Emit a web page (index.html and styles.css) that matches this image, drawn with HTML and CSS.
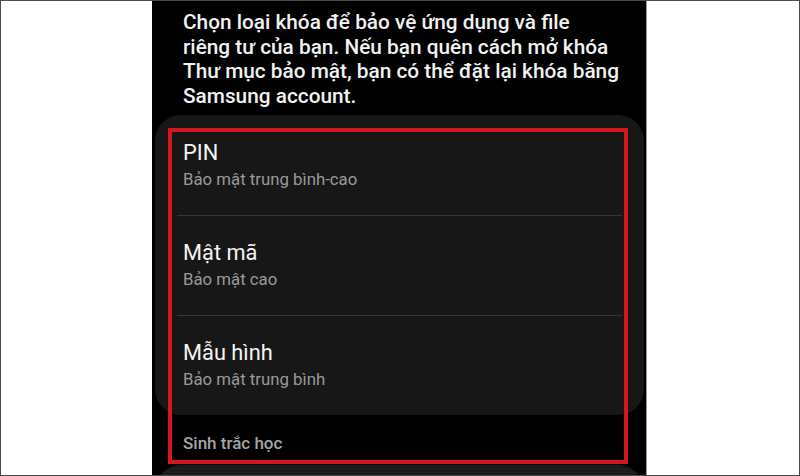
FILE: index.html
```html
<!DOCTYPE html>
<html lang="vi">
<head>
<meta charset="utf-8">
<link rel="stylesheet" href="styles.css">
</head>
<body>
<div class="frame">
  <div class="phone">
    <p class="intro">Chọn loại khóa để bảo vệ ứng dụng và file<br>riêng tư của bạn. Nếu bạn quên cách mở khóa<br>Thư mục bảo mật, bạn có thể đặt lại khóa bằng<br>Samsung account.</p>
    <div class="card">
      <div class="item">
        <div class="title">PIN</div>
        <div class="sub">Bảo mật trung bình-cao</div>
      </div>
      <div class="item">
        <div class="title">Mật mã</div>
        <div class="sub">Bảo mật cao</div>
      </div>
      <div class="item">
        <div class="title">Mẫu hình</div>
        <div class="sub">Bảo mật trung bình</div>
      </div>
    </div>
    <div class="section">Sinh trắc học</div>
    <div class="card card-next"></div>
  </div>
  <div class="highlight"></div>
</div>
</body>
</html>
```

FILE: styles.css
```css
* { box-sizing: border-box; }
html, body { margin: 0; padding: 0; }
body {
  width: 800px;
  height: 476px;
  overflow: hidden;
  background: #fff;
  font-family: Roboto, "Noto Sans", "Liberation Sans", sans-serif;
}
.frame {
  position: relative;
  width: 800px;
  height: 476px;
  border: 1px solid #4a4a4a;
  background: #fff;
  padding-left: 151px;
  display: flex;
}
.phone {
  width: 495px;
  height: 100%;
  background: #000;
  border-right: 1px solid #9a9a9a;
  overflow: hidden;
  padding-top: 9px;
}
.intro {
  margin: 0;
  padding: 0 0 0 31px;
  font-size: 20.8px;
  font-weight: 500;
  line-height: 24.5px;
  color: #f2f2f2;
  white-space: nowrap;
}
.card {
  margin: 7px 2px 0 3px;
  background: #171717;
  border-radius: 26px;
}
.item {
  margin: 0 22px;
  padding: 23px 0 0 6px;
  height: 100px;
  border-top: 1px solid #363636;
}
.item:first-child { border-top-color: transparent; }
.title {
  font-size: 21.8px;
  line-height: 27px;
  color: #f4f4f4;
}
.sub {
  margin-top: 3px;
  font-size: 16.8px;
  line-height: 21px;
  color: #9a9a9a;
}
.section {
  margin-top: 18px;
  padding-left: 31px;
  font-size: 17px;
  font-weight: 500;
  line-height: 20px;
  color: #a6a6a6;
}
.card-next {
  margin-top: 12px;
  height: 60px;
  background: #1b1b1b;
}
.highlight {
  position: absolute;
  left: 167px;
  top: 127px;
  width: 460px;
  height: 336px;
  border: 4px solid #d2171f;
}
```
